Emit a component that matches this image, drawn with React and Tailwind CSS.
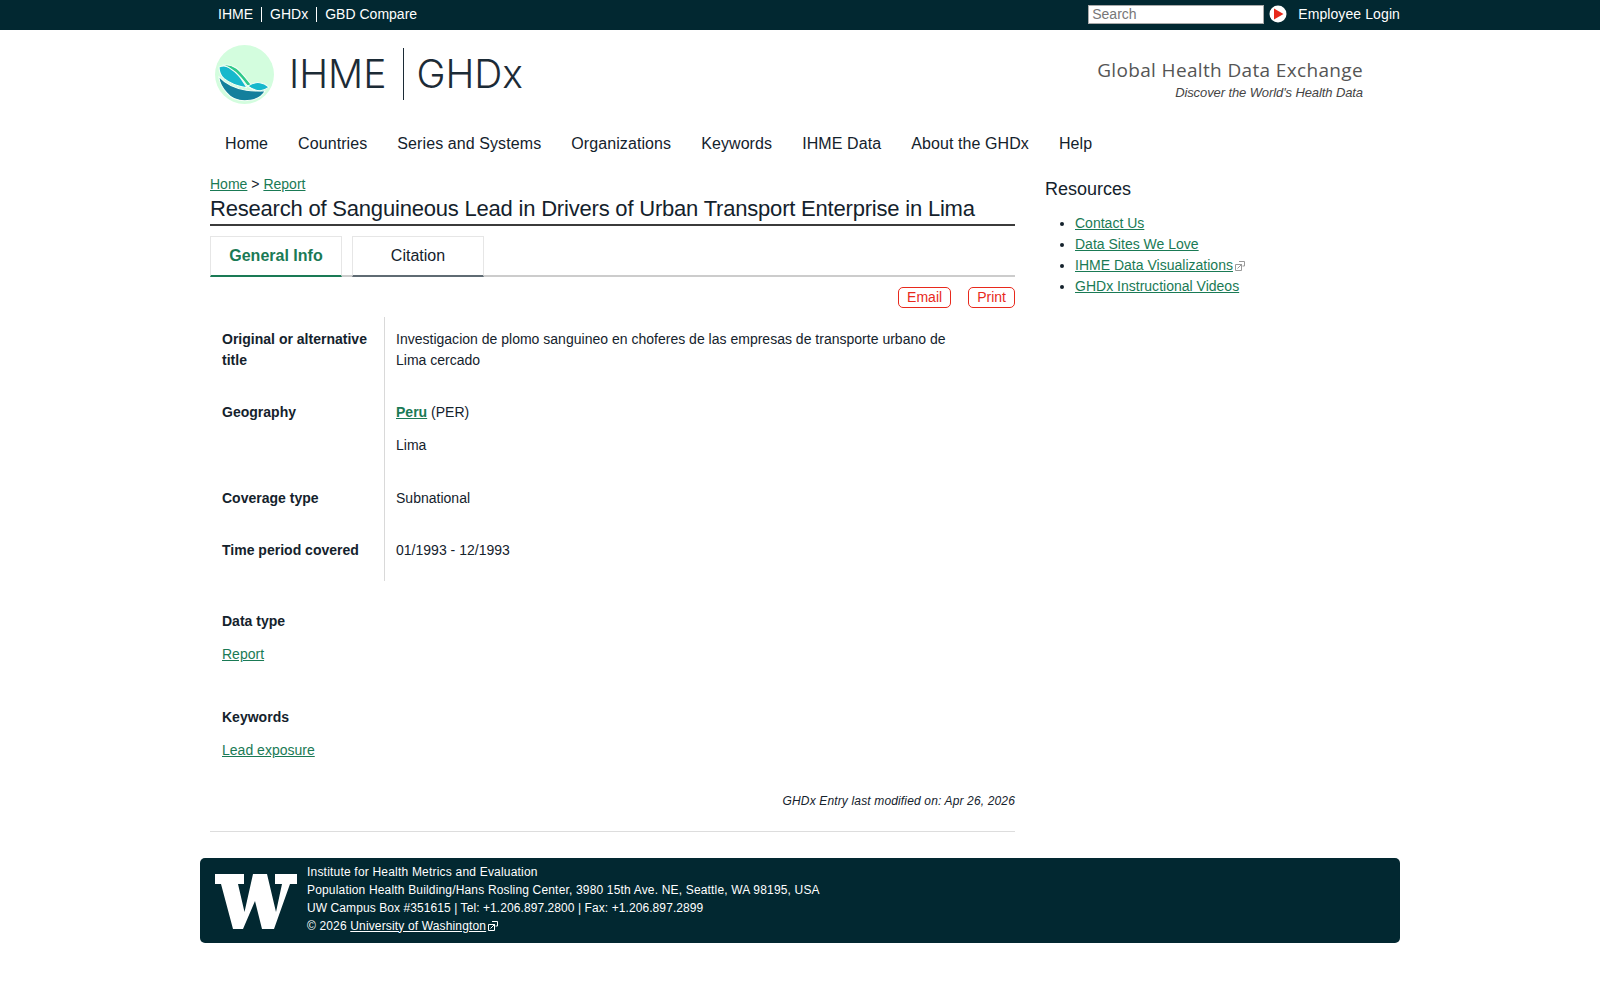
const fontFamily = "font-['Liberation_Sans',Arial,sans-serif]";

function ExternalIcon({ className }) {
  return (
    <svg viewBox="0 0 10 10" className={className} fill="none" stroke="currentColor" strokeWidth="1">
      <path d="M4 .5h5.500v4.500h-2" />
      <path d="M.5 3.500h6v6h-6z" />
      <path d="M2.500 7.500l4-4M4 3.500h2.500v2.500" />
    </svg>
  );
}

function Logo() {
  return (
    <svg viewBox="15 15 175 175" className="w-[59px] h-[59px] shrink-0 mt-[2px]">
      <circle cx="102.500" cy="102.500" r="87.500" fill="#d3fdde" />
      <g stroke="#f4fff7" strokeWidth="3" strokeLinejoin="round">
        <path d="M26 108c20 22 50 36 82 41 18 3 38 3 56 2-8 15-24 25-44 28-26 4-54-2-70-22-14-15-22-31-24-49z" fill="#147f9c" />
        <path d="M27 80c10-4 22-4 34 2 18 10 30 30 44 52l4 8c-26-4-50-13-67-27-9-8-15-22-15-35z" fill="#16b8cc" />
        <path d="M39 74c14-2 28 2 40 10 14 10 28 30 46 52h-14C94 112 72 84 39 74z" fill="#2fc98a" />
        <path d="M112 137c12-8 24-12 36-10 10 1 20 7 27 13-8 6-16 9-25 11-14-1-27-6-38-14z" fill="#16b8cc" />
        <path d="M110 136l22 14" fill="none" />
      </g>
    </svg>
  );
}

function UwLogo() {
  return (
    <svg viewBox="0 0 82 55" className="w-[82px] h-[55px] shrink-0">
      <path
        fill="#fff"
        d="M0 0H29V10H23L29.500 38L38 0H52L61 38L67 10H60V0H82V10H75L59 55H47L40 27L28 55H18L6 10H0Z"
      />
    </svg>
  );
}

function InfoRow({ label, children, extra }) {
  return (
    <div className="flex">
      <div className={`w-[175px] shrink-0 border-r border-[#d9d9d9] pl-3 pr-4 pt-3 font-semibold text-sm leading-[21px] ${extra}`}>
        {label}
      </div>
      <div className={`pl-[11px] pt-3 text-sm leading-[21px] max-w-[570px] ${extra}`}>{children}</div>
    </div>
  );
}

function GreenLink({ children, bold }) {
  return (
    <a href="#" className={`text-[#1a7a55] underline ${bold ? "font-bold" : ""}`}>
      {children}
    </a>
  );
}

export default function App() {
  const navItems = ["Home", "Countries", "Series and Systems", "Organizations", "Keywords", "IHME Data", "About the GHDx", "Help"];

  return (
    <div className={`min-h-[1000px] bg-white text-[#14222c] tracking-[0.01px] ${fontFamily}`}>
      <div className="h-[30px] bg-[#022831] text-white text-sm">
        <div className="w-[1200px] mx-auto h-full flex items-center justify-between pb-[2px]">
          <div className="flex items-center pl-[10px]">
            <a className="px-2 h-[15px] leading-[14px]">IHME</a>
            <a className="px-2 h-[15px] leading-[14px] border-l border-white">GHDx</a>
            <a className="px-2 h-[15px] leading-[14px] border-l border-white">GBD Compare</a>
          </div>
          <div className="flex items-center">
            <div className="w-[176px] h-[19px] bg-white border border-[#aaa] text-[#777] pl-[3px] leading-[16px]">Search</div>
            <svg viewBox="0 0 18 18" className="w-[18px] h-[18px] ml-[5px]">
              <circle cx="9" cy="9" r="8.500" fill="#fff" />
              <path d="M5 3.500l9.500 5.500-9.500 5.500z" fill="#e8291c" />
            </svg>
            <a className="ml-[11px] tracking-[0.1px]">Employee Login</a>
          </div>
        </div>
      </div>

      <div className="w-[1200px] mx-auto">
        <div className="flex justify-between pl-[15px] pr-[37px] pt-[14px]">
          <div className="flex items-center h-[59px]">
            <Logo />
            <span className="ml-[15px] pt-[2px] text-[39px] tracking-normal font-light text-[#1c2b36] font-['Inter',sans-serif]">IHME</span>
            <span className="w-px h-[52px] bg-[#1c2b36] ml-[17px]"></span>
            <span className="ml-[12px] pt-[2px] text-[39px] tracking-normal font-light text-[#1c2b36] font-['Inter',sans-serif]">GHDx</span>
          </div>
          <div className="text-right pt-[13px]">
            <div className="text-[19px] leading-[26px] tracking-[0.35px] text-[#555] font-['Open_Sans',sans-serif]">Global Health Data Exchange</div>
            <div className="text-[13px] italic leading-[18px] mt-px tracking-[-0.1px] text-[#444]">Discover the World's Health Data</div>
          </div>
        </div>

        <nav className="flex gap-[30px] pl-[25px] mt-[29px] text-base tracking-[0.09px] leading-6">
          {navItems.map((item) => (
            <a key={item}>{item}</a>
          ))}
        </nav>

        <div className="flex mt-[18px]">
          <div className="w-[805px] ml-[10px]">
            <div className="text-sm leading-5">
              <GreenLink>Home</GreenLink> &gt; <GreenLink>Report</GreenLink>
            </div>
            <h1 className="mt-px text-[22px] leading-[28px] tracking-[-0.2px] border-b-2 border-[#3b3b3b] pb-[1px]">
              Research of Sanguineous Lead in Drivers of Urban Transport Enterprise in Lima
            </h1>

            <div className="flex gap-[10px] mt-[10px] h-[41px] border-b-2 border-[#ccc]">
              <div className="w-[132px] h-[41px] border border-[#e6e6e6] border-b-2 border-b-[#1a7a55] text-center leading-[37px] font-bold text-[#1a7a55]">
                General Info
              </div>
              <div className="w-[132px] h-[41px] border border-[#e6e6e6] border-b-2 border-b-[#5f6b73] text-center leading-[37px]">
                Citation
              </div>
            </div>

            <div className="flex justify-end gap-[17px] mt-[10px] text-sm">
              <a className="h-[21px] px-[8px] leading-[19px] border border-[#e8291c] text-[#e8291c] rounded-[5px]">Email</a>
              <a className="h-[21px] px-[8px] leading-[19px] border border-[#e8291c] text-[#e8291c] rounded-[5px]">Print</a>
            </div>

            <div className="mt-[9px]">
              <InfoRow label="Original or alternative title" extra="pb-[19px]">
                Investigacion de plomo sanguineo en choferes de las empresas de transporte urbano de Lima cercado
              </InfoRow>
              <InfoRow label="Geography" extra="pb-[20px]">
                <p>
                  <GreenLink bold>Peru</GreenLink> (PER)
                </p>
                <p className="mt-3">Lima</p>
              </InfoRow>
              <InfoRow label="Coverage type" extra="pb-[19px]">Subnational</InfoRow>
              <InfoRow label="Time period covered" extra="pb-[20px]">01/1993 - 12/1993</InfoRow>
            </div>

            <div className="pl-3 mt-[30px] text-sm leading-[21px]">
              <div className="font-semibold">Data type</div>
              <div className="mt-3">
                <GreenLink>Report</GreenLink>
              </div>
              <div className="font-semibold mt-[42px]">Keywords</div>
              <div className="mt-3">
                <GreenLink>Lead exposure</GreenLink>
              </div>
            </div>

            <div className="text-right text-[12px] italic tracking-[0.15px] leading-5 mt-[30px] pb-[20px] border-b border-[#ddd]">
              GHDx Entry last modified on: Apr 26, 2026
            </div>
          </div>

          <div className="ml-[30px] w-[340px] pt-[3px]">
            <h2 className="text-lg leading-6">Resources</h2>
            <ul className="list-disc pl-[30px] mt-[12px] text-sm leading-[21px]">
              <li>
                <GreenLink>Contact Us</GreenLink>
              </li>
              <li>
                <GreenLink>Data Sites We Love</GreenLink>
              </li>
              <li>
                <GreenLink>IHME Data Visualizations</GreenLink>
                <ExternalIcon className="inline w-[10px] h-[10px] ml-[2px] text-[#999]" />
              </li>
              <li>
                <GreenLink>GHDx Instructional Videos</GreenLink>
              </li>
            </ul>
          </div>
        </div>

        <div className="mt-[26px] h-[85px] bg-[#022831] rounded-[5px] flex items-center text-white text-xs leading-[18px]">
          <div className="ml-[15px] mt-[2px]">
            <UwLogo />
          </div>
          <div className="ml-[10px] pb-[4px]">
            <div className="tracking-[0.2px]">Institute for Health Metrics and Evaluation</div>
            <div className="tracking-[0.17px]">Population Health Building/Hans Rosling Center, 3980 15th Ave. NE, Seattle, WA 98195, USA</div>
            <div className="tracking-[0.08px]">UW Campus Box #351615 | Tel: +1.206.897.2800 | Fax: +1.206.897.2899</div>
            <div className="tracking-[0.15px]">
              © 2026 <a className="underline">University of Washington</a>
              <ExternalIcon className="inline w-[10px] h-[10px] ml-[2px] text-white" />
            </div>
          </div>
        </div>
      </div>
    </div>
  );
}
